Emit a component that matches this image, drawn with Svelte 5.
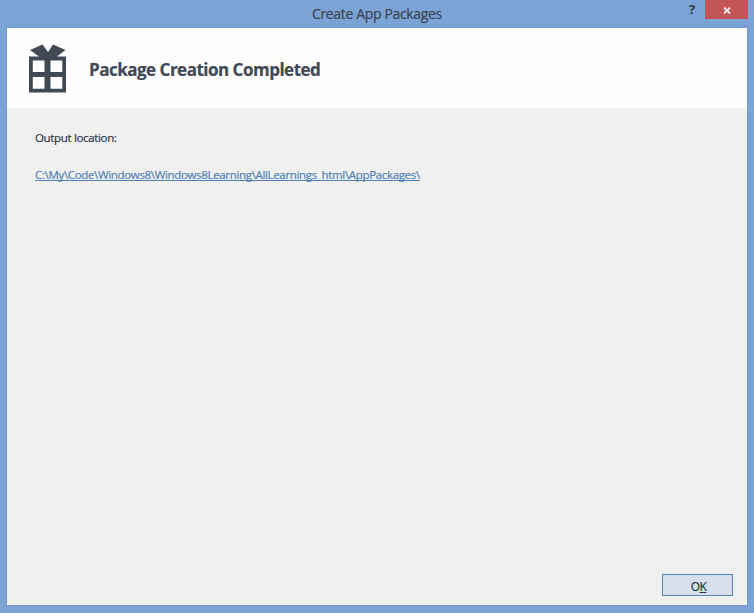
<script>
  const outputPath = 'C:\\My\\Code\\Windows8\\Windows8Learning\\AllLearnings_html\\AppPackages\\';
</script>

<div class="window">
  <div class="titlebar">
    <span class="title">Create App Packages</span>
    <div class="controls">
      <span class="help">?</span>
      <button class="close" aria-label="Close">
        <svg width="8" height="7" viewBox="0 0 8 7"><path d="M1 .5 7 6.5M7 .5 1 6.5" stroke="#f4eeee" stroke-width="1.8" /></svg>
      </button>
    </div>
  </div>
  <div class="client">
    <header>
      <svg class="gift" width="38" height="50" viewBox="0 0 38 50">
        <path fill="#414954" fill-rule="evenodd" d="M0 12.500H10L1 6 13.500.500 19 8 24 .500 36.500 6 28 12.500H37V48.500H0ZM3.800 16.500V28H15.500V16.500ZM21.500 16.500V28H33.300V16.500ZM3.800 33V44.800H15.500V33ZM21.500 33V44.800H33.300V33Z" />
      </svg>
      <h1>Package Creation Completed</h1>
    </header>
    <main>
      <p>Output location:</p>
      <a href="#output">{outputPath}</a>
    </main>
    <footer>
      <button class="ok">O<span>K</span></button>
    </footer>
  </div>
</div>

<style>
  :global(body) { margin: 0; }
  .window {
    box-sizing: border-box;
    width: 754px;
    height: 613px;
    padding: 0 7px 8px;
    background: #7ba3d5;
    font-family: "Open Sans", "Noto Sans", sans-serif;
    display: flex;
    flex-direction: column;
  }
  .titlebar {
    height: 28px;
    display: grid;
    grid-template-columns: 1fr auto;
    flex: none;
  }
  .title {
    padding-left: 305px;
    font-size: 14px;
    line-height: 28px;
    letter-spacing: -0.35px;
    color: #39414c;
    -webkit-text-stroke: 0.15px currentColor;
    white-space: nowrap;
  }
  .controls { display: flex; align-items: flex-start; margin-right: -1px; }
  .help {
    width: 7px;
    margin-right: 9px;
    font: 700 13px/19px "Open Sans", sans-serif;
    color: #333b45;
  }
  .close {
    width: 43px;
    height: 19px;
    padding: 1px 0 0;
    border: 0;
    background: #c45356;
    display: flex;
    align-items: center;
    justify-content: center;
  }
  .client {
    flex: 1;
    box-sizing: border-box;
    background: #f0f0ef;
    box-shadow: 0 0 0 1px #7197c7;
    display: flex;
    flex-direction: column;
  }
  header {
    height: 80px;
    background: #fefefe;
    display: flex;
    align-items: flex-start;
  }
  .gift { margin: 16px 0 0 22px; flex: none; }
  h1 {
    margin: 30px 0 0 22px;
    font-size: 17px;
    line-height: 24px;
    letter-spacing: -0.5px;
    font-weight: 700;
    color: #414954;
    -webkit-text-stroke: 0.2px currentColor;
    white-space: nowrap;
  }
  main {
    flex: 1;
    padding: 21px 28px 0;
    font-size: 11.5px;
    line-height: 18px;
    -webkit-text-stroke: 0.2px currentColor;
  }
  p { margin: 0 0 19px; color: #29384d; letter-spacing: -0.34px; }
  a {
    display: inline-block;
    color: #4f7fb5;
    letter-spacing: -0.335px;
    white-space: nowrap;
    text-underline-offset: 1px;
    text-decoration-thickness: 1px;
    text-decoration-skip-ink: none;
  }
  footer { display: flex; justify-content: flex-end; padding: 0 14px 9px 0; }
  .ok {
    box-sizing: border-box;
    width: 71px;
    height: 22px;
    padding: 3px 0 0 2px;
    border: 1px solid #5585b9;
    background: #d7dfeb;
    font: 12px/16px "Open Sans", sans-serif;
    letter-spacing: -0.5px;
    color: #27364a;
    -webkit-text-stroke: 0.2px currentColor;
  }
  .ok span { text-decoration: underline; text-underline-offset: 1px; }
</style>
